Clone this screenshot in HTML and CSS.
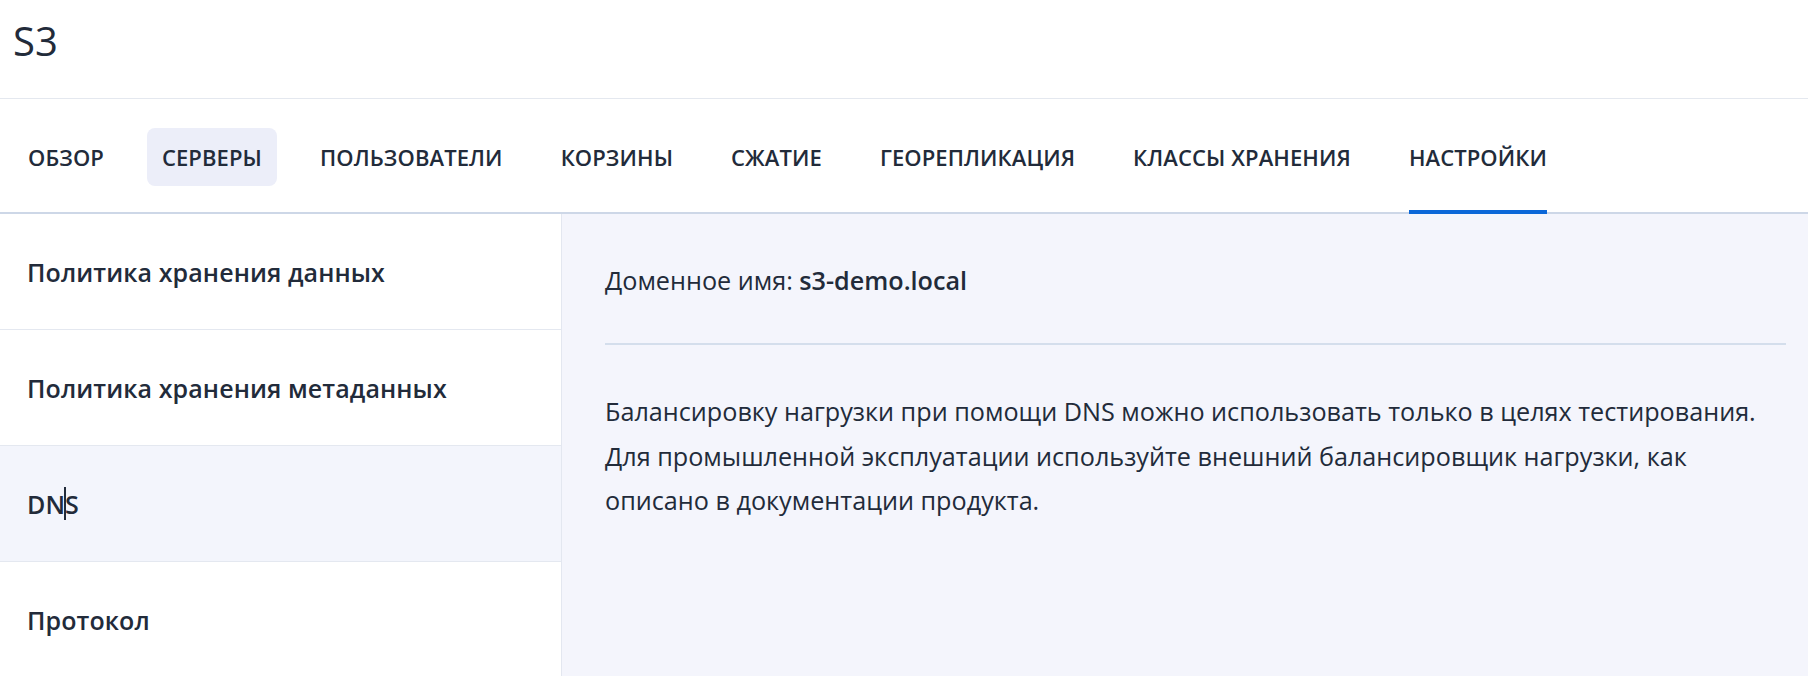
FILE: index.html
```html
<!DOCTYPE html>
<html lang="ru">
<head>
<meta charset="utf-8">
<title>S3</title>
<link rel="stylesheet" href="styles.css">
</head>
<body>
<header class="page-header">
  <h1 class="page-title">S3</h1>
</header>
<nav class="tabs">
  <a class="tab"><span class="tab-label">ОБЗОР</span></a>
  <a class="tab tab-hover"><span class="tab-label">СЕРВЕРЫ</span></a>
  <a class="tab"><span class="tab-label">ПОЛЬЗОВАТЕЛИ</span></a>
  <a class="tab"><span class="tab-label">КОРЗИНЫ</span></a>
  <a class="tab"><span class="tab-label">СЖАТИЕ</span></a>
  <a class="tab"><span class="tab-label">ГЕОРЕПЛИКАЦИЯ</span></a>
  <a class="tab"><span class="tab-label">КЛАССЫ ХРАНЕНИЯ</span></a>
  <a class="tab tab-active"><span class="tab-label">НАСТРОЙКИ</span></a>
</nav>
<div class="main">
  <aside class="sidebar">
    <div class="side-item">Политика хранения данных</div>
    <div class="side-item">Политика хранения метаданных</div>
    <div class="side-item side-item-selected">DN<span class="caret"></span>S</div>
    <div class="side-item">Протокол</div>
  </aside>
  <section class="content">
    <div class="domain">Доменное имя: <strong class="domain-value">s3-demo.local</strong></div>
    <hr class="divider">
    <p class="note">Балансировку нагрузки при помощи DNS можно использовать только в целях тестирования.<br>Для промышленной эксплуатации используйте внешний балансировщик нагрузки, как<br>описано в документации продукта.</p>
  </section>
</div>
</body>
</html>
```

FILE: styles.css
```css
* {
  box-sizing: border-box;
}

html, body {
  margin: 0;
  padding: 0;
  height: 100%;
}

body {
  font-family: "Open Sans", "Noto Sans", sans-serif;
  color: #222b3a;
  background: #ffffff;
  overflow: hidden;
}

.page-header {
  height: 99px;
  padding: 14px 0 0 13px;
  border-bottom: 1px solid #e4e8ef;
}

.page-title {
  margin: 0;
  font-size: 40px;
  font-weight: 400;
  line-height: 54px;
  color: #222b3a;
}

.tabs {
  display: flex;
  gap: 28px;
  height: 115px;
  padding: 3px 0 0 13px;
  border-bottom: 2px solid #cdd7e7;
}

.tab {
  position: relative;
  display: flex;
  align-items: center;
  text-decoration: none;
  color: #222b3a;
}

.tab-label {
  display: block;
  height: 58px;
  line-height: 58px;
  padding: 0 15px;
  border-radius: 8px;
  font-size: 22px;
  font-weight: 600;
  letter-spacing: 0.1px;
  white-space: nowrap;
}

.tab-hover .tab-label {
  background: #eceef9;
}

.tab-active::after {
  content: "";
  position: absolute;
  left: 15px;
  right: 15px;
  bottom: -2px;
  height: 4px;
  background: #0b67d8;
}

.main {
  display: flex;
  height: 462px;
}

.sidebar {
  width: 562px;
  flex: none;
  background: #ffffff;
  border-right: 1px solid #e3e7f0;
}

.side-item {
  display: flex;
  align-items: center;
  height: 116px;
  padding-left: 27px;
  border-bottom: 1px solid #e4e8f0;
  font-size: 25px;
  font-weight: 600;
  letter-spacing: 0.1px;
  color: #222b3a;
}

.side-item-selected {
  background: #f3f5fc;
}

.caret {
  display: inline-block;
  width: 2px;
  height: 33px;
  margin: 0 -1px 0 -1px;
  background: #222b3a;
}

.content {
  flex: 1;
  background: #f4f5fc;
  padding: 48px 22px 0 43px;
}

.domain {
  font-size: 25.2px;
  line-height: 36px;
}

.domain-value {
  font-weight: 600;
}

.divider {
  margin: 45px 0 0 0;
  border: none;
  border-top: 2px solid #d4deec;
}

.note {
  margin: 44px 0 0 0;
  font-size: 25.2px;
  line-height: 44.5px;
}
```
